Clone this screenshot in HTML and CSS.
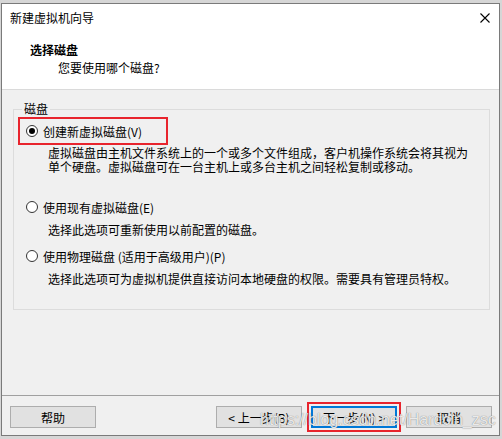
FILE: index.html
```html
<!DOCTYPE html>
<html lang="zh-CN">
<head>
    <meta charset="UTF-8">
    <meta name="viewport" content="width=device-width, initial-scale=1.0">
    <title>新建虚拟机向导</title>
    <link rel="stylesheet" href="styles.css">
</head>
<body>

    <div class="window">
        <div class="titlebar">
            <span class="title">新建虚拟机向导</span>
            <svg class="close" width="10" height="10" viewBox="0 0 10 10">
                <path d="M0.5 0.5 L9.5 9.5 M9.5 0.5 L0.5 9.5" stroke="#000" stroke-width="1.1" fill="none"/>
            </svg>
        </div>

        <div class="header">
            <h2>选择磁盘</h2>
            <p class="subtitle">您要使用哪个磁盘?</p>
        </div>

        <div class="content">
            <fieldset class="group">
                <legend>磁盘</legend>

                <div class="option marked">
                    <span class="radio checked"></span>
                    <span>创建新虚拟磁盘(V)</span>
                </div>
                <p class="desc first">虚拟磁盘由主机文件系统上的一个或多个文件组成，客户机操作系统会将其视为<br>单个硬盘。虚拟磁盘可在一台主机上或多台主机之间轻松复制或移动。</p>

                <div class="option">
                    <span class="radio"></span>
                    <span>使用现有虚拟磁盘(E)</span>
                </div>
                <p class="desc">选择此选项可重新使用以前配置的磁盘。</p>

                <div class="option">
                    <span class="radio"></span>
                    <span>使用物理磁盘 (适用于高级用户)(P)</span>
                </div>
                <p class="desc">选择此选项可为虚拟机提供直接访问本地硬盘的权限。需要具有管理员特权。</p>
            </fieldset>
        </div>

        <div class="footer">
            <button>帮助</button>
            <div class="spacer"></div>
            <button>&lt; 上一步(B)</button>
            <button class="default">下一步(N) &gt;</button>
            <button>取消</button>
        </div>

        <!-- watermark from the source screenshot -->
        <span class="watermark">https://blog.csdn.net/Hardcin_zsc</span>
    </div>

</body>
</html>
```

FILE: styles.css
```css
* {
    box-sizing: border-box;
    margin: 0;
    padding: 0;
}

body {
    font-family: 'Noto Sans CJK SC', 'Microsoft YaHei', sans-serif;
    font-size: 12px;
    color: #000;
    background: #d6d6d6;
    padding: 3px 0 0 1px;
    height: 439px;
    overflow: hidden;
}

.window {
    position: relative;
    width: 499px;
    height: 433px;
    border: 1px solid #7a7a7a;
    background: #f0f0f0;
    display: flex;
    flex-direction: column;
}

.titlebar {
    height: 28px;
    background: #fff;
    display: flex;
    align-items: center;
    justify-content: space-between;
    padding: 0 9px 0 8px;
}

.title {
    line-height: 14px;
}

.header {
    height: 58px;
    background: #fff;
    border-bottom: 1px solid #dadada;
    padding: 10px 0 0 28px;
}

.header h2 {
    font-size: 12px;
    font-weight: bold;
    line-height: 16px;
}

.subtitle {
    line-height: 16px;
    margin: 2px 0 0 28px;
}

.content {
    flex: 1;
    padding: 12px 9px 0 11px;
}

.group {
    border: 1px solid #dcdcdc;
    padding: 1px 4px 23px 4px;
    min-width: 0;
}

.group legend {
    padding: 0 2px;
    margin-left: 4px;
    line-height: 14px;
}

.option {
    display: flex;
    align-items: center;
    gap: 5px;
    width: max-content;
    height: 18px;
    padding-left: 6px;
    border: 2px solid transparent;
    box-sizing: content-box;
    margin-top: 8px;
}

.option.marked {
    border-color: #e8242d;
    height: 24px;
    width: 140px;
    margin-top: 0;
}

.desc.first + .option {
    margin-top: 22px;
}

.radio {
    width: 12px;
    height: 12px;
    border: 1px solid #333;
    border-radius: 50%;
    background: #fff;
    display: flex;
    align-items: center;
    justify-content: center;
}

.radio.checked::after {
    content: "";
    width: 6px;
    height: 6px;
    border-radius: 50%;
    background: #000;
}

.desc {
    padding-left: 30px;
    line-height: 14px;
    margin-top: 5px;
    white-space: nowrap;
}

.desc.first {
    margin-top: 1px;
}

.footer {
    height: 40px;
    border-top: 1px solid #a0a0a0;
    display: flex;
    align-items: flex-start;
    gap: 9px;
    padding: 10px 7px 0 8px;
}

.spacer {
    flex: 1;
}

button {
    width: 86px;
    height: 22px;
    background: #e1e1e1;
    border: 1px solid #adadad;
    font-family: inherit;
    font-size: 12px;
    color: #000;
}

button.default {
    border: 2px solid #0078d7;
    outline: 2px solid #e8242d;
    outline-offset: 2px;
}

.watermark {
    position: absolute;
    left: 258px;
    top: 407px;
    font-family: 'Liberation Sans', Arial, sans-serif;
    font-size: 16px;
    color: rgba(255, 255, 255, 0.85);
    text-shadow: 0 0 1px rgba(70, 70, 70, 0.8);
    pointer-events: none;
    white-space: nowrap;
}
```
